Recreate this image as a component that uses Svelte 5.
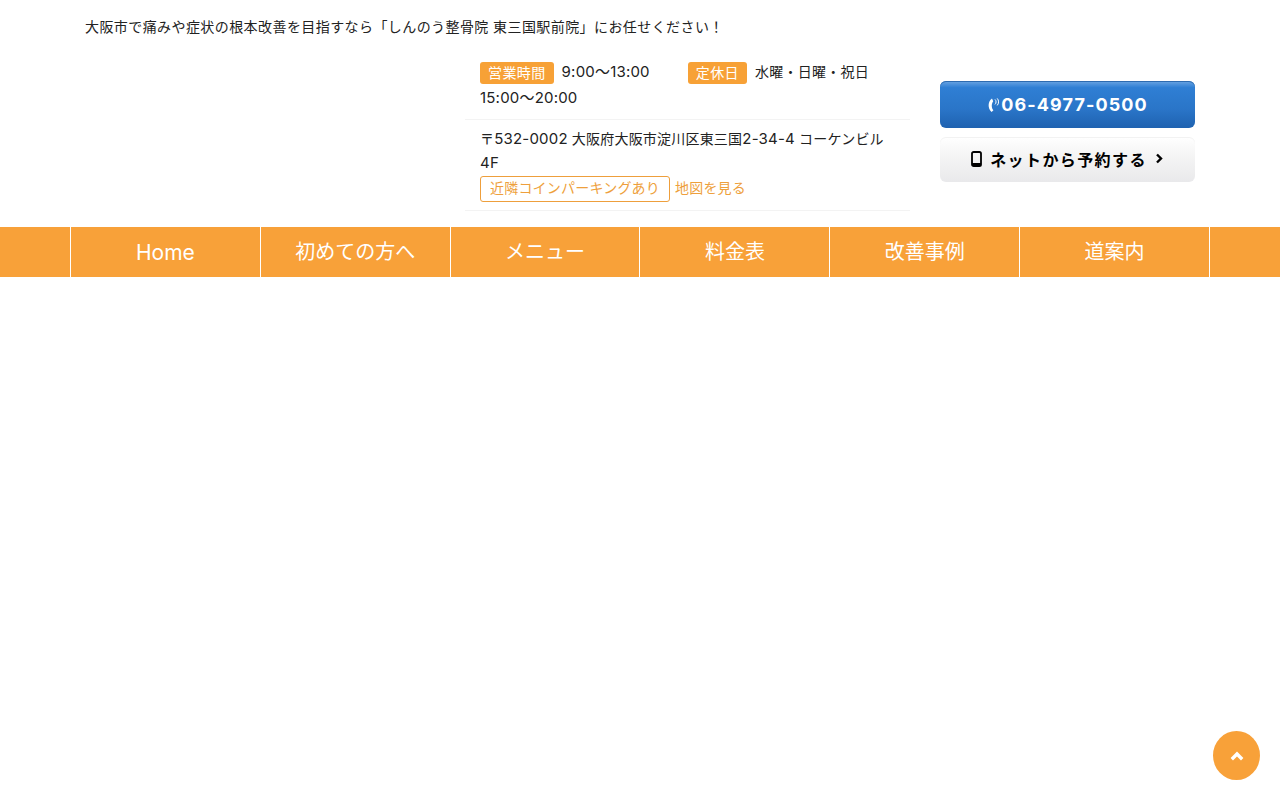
<script lang="ts">
	const navItems = ['Home', '初めての方へ', 'メニュー', '料金表', '改善事例', '道案内'];
</script>

<div class="page">
	<header class="container">
		<p class="lead">大阪市で痛みや症状の根本改善を目指すなら「しんのう整骨院 東三国駅前院」にお任せください！</p>
		<div class="head-row">
			<div class="info">
				<div class="info-row hours">
					<span class="tag">営業時間</span><span class="time num">9:00〜13:00</span><span class="tag closed">定休日</span><span class="days">水曜・日曜・祝日</span>
					<br /><span class="num">15:00〜20:00</span>
				</div>
				<div class="info-row address">
					〒<span class="num">532-0002</span> 大阪府大阪市淀川区東三国<span class="num">2-34-4</span> コーケンビル<br /><span class="num">4F</span>
					<div class="access">
						<span class="parking">近隣コインパーキングあり</span><a href="#map">地図を見る</a>
					</div>
				</div>
			</div>
			<div class="cta">
				<a class="btn tel" href="#tel">
					<svg width="14" height="16" viewBox="0 0 14 16" aria-hidden="true">
						<path d="M5 1.6 C0.8 4.2 0.4 11.6 4.6 15 L6.4 13.2 C4.2 10.8 4.4 6.8 6.2 4.2 Z" fill="#fff" />
						<path d="M8 2.4 C9.4 3.6 9.4 6.2 8 7.4 M10.2 1.4 C12 3 12 6.8 10.2 8.4" fill="none" stroke="#fff" stroke-width="1" />
					</svg><span>06-4977-0500</span>
				</a>
				<a class="btn web" href="#web">
					<svg width="11" height="16" viewBox="0 0 11 16" aria-hidden="true">
						<rect x="1" y="1" width="9" height="14" rx="1.6" fill="none" stroke="#000" stroke-width="1.8" />
						<rect x="1" y="12" width="9" height="3" fill="#000" />
					</svg>
					<span>ネットから予約する</span>
					<svg width="9" height="11" viewBox="0 0 9 11" aria-hidden="true">
						<path d="M2 1.5 L6 5.5 L2 9.5" fill="none" stroke="#000" stroke-width="2.4" />
					</svg>
				</a>
			</div>
		</div>
	</header>

	<nav>
		<ul class="nav-list">
			{#each navItems as item}
				<li><a href="#top">{item}</a></li>
			{/each}
		</ul>
	</nav>

	<a class="to-top" href="#top" aria-label="ページ上部へ">
		<svg width="14" height="10" viewBox="0 0 14 10" aria-hidden="true">
			<path d="M1.8 8.2 L7 3 L12.2 8.2" fill="none" stroke="#fff" stroke-width="3.4" />
		</svg>
	</a>
</div>

<style>
	:global(body) {
		margin: 0;
		background: #fff;
		color: #222;
		font-family: "Liberation Sans", "Noto Sans CJK JP", sans-serif;
	}
	.page { min-height: 800px; }
	.container { width: 1110px; margin: 0 auto; padding: 0 15px; }
	.lead { margin: 0; padding-top: 17px; font-size: 14px; line-height: 20px; letter-spacing: .42px; }
	.head-row { display: flex; justify-content: flex-end; margin-top: 22px; }
	.info { width: 445px; margin-right: 30px; font-size: 14px; line-height: 25px; }
	.info-row { padding: 0 15px; border-bottom: 1px solid #f3f3f3; letter-spacing: .2px; }
	.num { font-family: Inter, "Noto Sans CJK JP", sans-serif; font-size: 15px; letter-spacing: .2px; }
	.hours { padding-bottom: 8px; }
	.address { padding-top: 7px; padding-bottom: 8px; line-height: 24px; }
	.tag {
		display: inline-block; padding: 0 8px; background: #f7a136; color: #fff;
		font-size: 14px; line-height: 22px; border-radius: 3px; letter-spacing: .4px;
		vertical-align: -1px;
	}
	.time { margin: 0 38px 0 8px; }
	.days { margin-left: 8px; letter-spacing: .25px; }
	.access { display: flex; align-items: center; height: 27px; font-size: 14px; color: #ee9f3c; }
	.parking { padding: 0 9px 1px; border: 1px solid #ee9f3c; border-radius: 3px; line-height: 23px; margin-right: 5px; }
	.access a { color: #ee9f3c; text-decoration: none; padding-bottom: 1px; }
	.cta { width: 255px; margin-top: 22px; display: flex; flex-direction: column; gap: 9px; }
	.btn { display: flex; align-items: center; justify-content: center; border-radius: 6px; text-decoration: none; font-weight: 700; }
	.tel {
		height: 47px; color: #fff; font-family: Inter, sans-serif; font-size: 18px; letter-spacing: 1.1px;
		background: linear-gradient(#6ba5e3, #2f7fd4 14%, #2a75c8 60%, #1f62b0);
		box-shadow: inset 0 1px #2d6bb0;
	}
	.web {
		box-sizing: border-box; height: 45px; padding-bottom: 2px; gap: 8px; color: #000; font-size: 16px; letter-spacing: 1.4px;
		background: linear-gradient(#fff, #f5f5f5 40%, #e9e9eb);
		box-shadow: inset 0 1px #f2f2f2;
	}
	nav { margin-top: 16px; background: #f8a139; }
	.nav-list { display: flex; width: 1139px; height: 50px; margin: 0 0 0 70px; padding: 0; list-style: none; border-right: 1px solid #fff; }
	.nav-list li { flex: 1; border-left: 1px solid #fff; }
	.nav-list li:first-child a { font-size: 21px; }
	.nav-list a { display: block; line-height: 51px; text-align: center; color: #fff; font-family: Inter, "Noto Sans CJK JP", sans-serif; font-size: 20px; text-decoration: none; }
	.to-top {
		position: fixed; right: 20px; bottom: 20px; width: 47px; height: 49px; border-radius: 50%;
		background: #f8a139; display: flex; align-items: center; justify-content: center;
	}
</style>
